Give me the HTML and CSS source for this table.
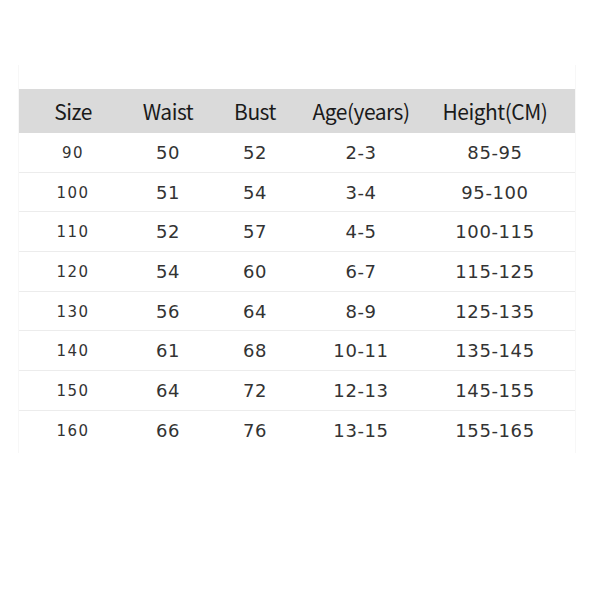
FILE: index.html
```html
<!DOCTYPE html>
<html>
<head>
<meta charset="utf-8">
<link rel="stylesheet" href="styles.css">
</head>
<body>
<div class="sheet">
  <div class="table">
    <div class="row head">
      <div>Size</div><div>Waist</div><div>Bust</div><div>Age(years)</div><div>Height(CM)</div>
    </div>
    <div class="row"><div class="size">90</div><div>50</div><div>52</div><div>2-3</div><div>85-95</div></div>
    <div class="row"><div class="size">100</div><div>51</div><div>54</div><div>3-4</div><div>95-100</div></div>
    <div class="row"><div class="size">110</div><div>52</div><div>57</div><div>4-5</div><div>100-115</div></div>
    <div class="row"><div class="size">120</div><div>54</div><div>60</div><div>6-7</div><div>115-125</div></div>
    <div class="row"><div class="size">130</div><div>56</div><div>64</div><div>8-9</div><div>125-135</div></div>
    <div class="row"><div class="size">140</div><div>61</div><div>68</div><div>10-11</div><div>135-145</div></div>
    <div class="row"><div class="size">150</div><div>64</div><div>72</div><div>12-13</div><div>145-155</div></div>
    <div class="row last"><div class="size">160</div><div>66</div><div>76</div><div>13-15</div><div>155-165</div></div>
  </div>
</div>
</body>
</html>
```

FILE: styles.css
```css
html, body {
  margin: 0;
  padding: 0;
  background: #ffffff;
}
.sheet {
  padding: 65px 24px 0 18px;
}
.table {
  width: 558px;
  border-left: 1px solid #f7f7f7;
  border-right: 1px solid #f7f7f7;
  padding-top: 24px;
  padding-bottom: 3px;
  box-sizing: border-box;
}
.row {
  display: grid;
  grid-template-columns: 108px 82px 92px 120px 148px;
  height: 38.7px;
  align-items: center;
  border-bottom: 1px solid #ececec;
  font-family: "DejaVu Sans", sans-serif;
  font-size: 18px;
  color: #333333;
  text-align: center;
  letter-spacing: 0.6px;
}
.row.last {
  border-bottom: none;
}
.row.head {
  height: 44px;
  background: #dadada;
  border-bottom: none;
  font-family: "Noto Sans CJK KR", "Noto Sans", sans-serif;
  font-size: 21px;
  letter-spacing: -0.5px;
  color: #1a1a1a;
}
.size {
  font-size: 15px;
  letter-spacing: 1.5px;
  padding-top: 1px;
}
```
